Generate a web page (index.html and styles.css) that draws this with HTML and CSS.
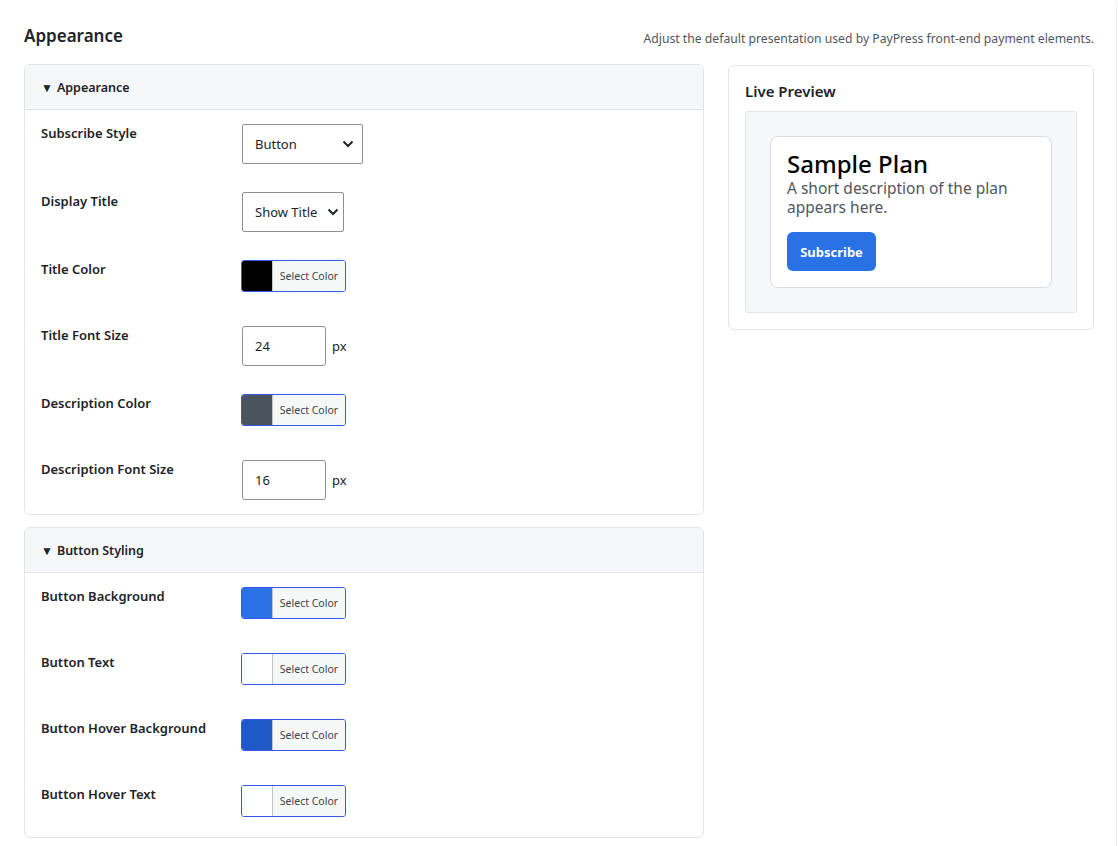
FILE: index.html
```html
<!DOCTYPE html>
<html lang="en">
<head>
    <meta charset="UTF-8">
    <meta name="viewport" content="width=device-width, initial-scale=1.0">
    <title>Appearance - PayPress</title>
    <link rel="stylesheet" href="styles.css">
</head>
<body>

    <div class="wrap">
        <div class="page-head">
            <h1>Appearance</h1>
            <p class="page-desc">Adjust the default presentation used by PayPress front-end payment elements.</p>
        </div>

        <div class="layout">
            <div class="settings">

                <div class="panel">
                    <div class="panel-head"><span class="caret">&#9660;</span> Appearance</div>
                    <div class="panel-body">
                        <div class="row">
                            <div class="row-label">Subscribe Style</div>
                            <div class="select-box select-wide">
                                <span>Button</span>
                                <svg width="12" height="8" viewBox="0 0 12 8"><path d="M1.5 1.5 6 6l4.5-4.5" fill="none" stroke="#1d2327" stroke-width="2"/></svg>
                            </div>
                        </div>
                        <div class="row">
                            <div class="row-label">Display Title</div>
                            <div class="select-box select-narrow">
                                <span>Show Title</span>
                                <svg width="12" height="8" viewBox="0 0 12 8"><path d="M1.5 1.5 6 6l4.5-4.5" fill="none" stroke="#1d2327" stroke-width="2"/></svg>
                            </div>
                        </div>
                        <div class="row">
                            <div class="row-label">Title Color</div>
                            <div class="color-picker">
                                <span class="swatch" style="background:#000000"></span>
                                <span class="color-btn">Select Color</span>
                            </div>
                        </div>
                        <div class="row">
                            <div class="row-label">Title Font Size</div>
                            <div class="num-field">
                                <input type="text" value="24">
                                <span class="unit">px</span>
                            </div>
                        </div>
                        <div class="row">
                            <div class="row-label">Description Color</div>
                            <div class="color-picker">
                                <span class="swatch" style="background:#4b535d"></span>
                                <span class="color-btn">Select Color</span>
                            </div>
                        </div>
                        <div class="row">
                            <div class="row-label">Description Font Size</div>
                            <div class="num-field">
                                <input type="text" value="16">
                                <span class="unit">px</span>
                            </div>
                        </div>
                    </div>
                </div>

                <div class="panel">
                    <div class="panel-head"><span class="caret">&#9660;</span> Button Styling</div>
                    <div class="panel-body">
                        <div class="row">
                            <div class="row-label">Button Background</div>
                            <div class="color-picker">
                                <span class="swatch" style="background:#2872e6"></span>
                                <span class="color-btn">Select Color</span>
                            </div>
                        </div>
                        <div class="row">
                            <div class="row-label">Button Text</div>
                            <div class="color-picker">
                                <span class="swatch" style="background:#ffffff"></span>
                                <span class="color-btn">Select Color</span>
                            </div>
                        </div>
                        <div class="row">
                            <div class="row-label">Button Hover Background</div>
                            <div class="color-picker">
                                <span class="swatch" style="background:#1e59c5"></span>
                                <span class="color-btn">Select Color</span>
                            </div>
                        </div>
                        <div class="row">
                            <div class="row-label">Button Hover Text</div>
                            <div class="color-picker">
                                <span class="swatch" style="background:#ffffff"></span>
                                <span class="color-btn">Select Color</span>
                            </div>
                        </div>
                    </div>
                </div>

            </div>

            <aside class="preview-panel">
                <h2>Live Preview</h2>
                <div class="preview-stage">
                    <div class="plan-card">
                        <h3 class="plan-title">Sample Plan</h3>
                        <p class="plan-desc">A short description of the plan appears here.</p>
                        <button class="plan-button">Subscribe</button>
                    </div>
                </div>
            </aside>
        </div>
    </div>

</body>
</html>
```

FILE: styles.css
```css
body {
    font-family: "Noto Sans", "Open Sans", sans-serif;
    margin: 0;
    padding: 0;
    background-color: #ffffff;
    color: #1d2327;
}
.wrap {
    margin: -4px 1px 0 0;
    padding: 27px 22px 40px 24px;
    border: 1px solid #eceef1;
    border-left: none;
    border-radius: 0 8px 8px 0;
}
.page-head {
    display: flex;
    justify-content: space-between;
    align-items: center;
    height: 24px;
    margin-bottom: 16px;
}
.page-head h1 {
    margin: 0;
    font-size: 17px;
    font-weight: 600;
    line-height: 24px;
}
.page-desc {
    margin: 4px 0 0;
    font-size: 12.2px;
    color: #50575e;
}
.layout {
    display: grid;
    grid-template-columns: 680px 366px;
    gap: 24px;
    align-items: start;
}
.settings {
    display: flex;
    flex-direction: column;
    gap: 12px;
}
.panel {
    border: 1px solid #e2e4e8;
    border-radius: 6px;
    background-color: #ffffff;
    overflow: hidden;
}
.panel-head {
    background-color: #f6f7fb;
    border-bottom: 1px solid #e2e4e8;
    height: 44px;
    display: flex;
    align-items: center;
    padding: 0 16px;
    font-size: 12.5px;
    font-weight: 600;
}
.caret {
    font-size: 12px;
    margin-right: 4px;
}
.panel-body {
    padding: 14px 16px;
}
.row {
    display: flex;
    align-items: flex-start;
}
.row + .row {
    margin-top: 28px;
}
.row-label {
    width: 201px;
    font-size: 13px;
    font-weight: 600;
    line-height: 18px;
}
.select-box {
    height: 40px;
    box-sizing: border-box;
    border: 1px solid #8c8f94;
    border-radius: 2px;
    display: flex;
    align-items: center;
    justify-content: space-between;
    padding: 0 8px 0 12px;
    font-size: 13px;
}
.select-wide {
    width: 121px;
}
.select-narrow {
    width: 102px;
    padding-right: 4px;
}
.color-picker {
    display: flex;
    height: 32px;
    width: 105px;
    box-sizing: border-box;
    border: 1px solid #3858e9;
    border-radius: 3px;
    overflow: hidden;
    margin-bottom: 6px;
    margin-left: -1px;
}
.swatch {
    width: 30px;
    flex-shrink: 0;
}
.color-btn {
    flex: 1;
    background-color: #f6f7f7;
    border-left: 1px solid #c3c4c7;
    font-size: 10.5px;
    color: #3c434a;
    display: flex;
    align-items: center;
    justify-content: center;
}
.num-field {
    display: flex;
    align-items: center;
}
.num-field input {
    width: 84px;
    height: 40px;
    box-sizing: border-box;
    border: 1px solid #8c8f94;
    border-radius: 3px;
    padding: 0 12px;
    font-family: inherit;
    font-size: 13px;
    color: #1d2327;
}
.unit {
    margin-left: 6px;
    font-size: 13px;
}
.preview-panel {
    border: 1px solid #e2e4e8;
    border-radius: 6px;
    padding: 15px 16px 16px;
    margin-top: 1px;
}
.preview-panel h2 {
    margin: 0 0 10px;
    font-size: 15px;
    font-weight: 600;
    line-height: 20px;
}
.preview-stage {
    background-color: #f6f7fb;
    border: 1px solid #e2e4e8;
    border-radius: 3px;
    padding: 24px;
}
.plan-card {
    background-color: #ffffff;
    border: 1px solid #d9dbe0;
    border-radius: 8px;
    padding: 13px 16px 16px;
}
.plan-title {
    margin: 0 0 1px;
    font-size: 24px;
    font-weight: 500;
    line-height: 28px;
    color: #000000;
}
.plan-desc {
    margin: 0 0 15px;
    font-size: 15.5px;
    line-height: 19px;
    color: #50575e;
}
.plan-button {
    background-color: #2872e6;
    color: #ffffff;
    border: none;
    border-radius: 6px;
    width: 89px;
    height: 39px;
    font-family: inherit;
    font-size: 13px;
    font-weight: 700;
    cursor: pointer;
    display: block;
}
```
